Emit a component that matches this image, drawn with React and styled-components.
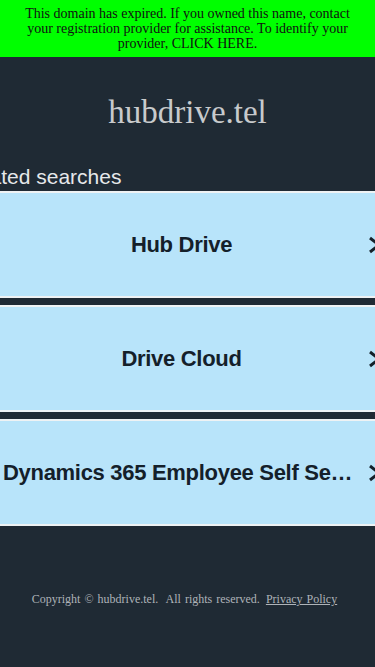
import styled, { createGlobalStyle } from "styled-components";

const GlobalStyle = createGlobalStyle`
    html, body {
        margin: 0;
        padding: 0;
        overflow-x: hidden;
        background: #1f2a34;
    }
    #root {
        min-height: 667px;
    }
`;

const Page = styled.div`
    min-height: 667px;
    background: #1f2a34;
    overflow: hidden;
`;

const Banner = styled.div`
    background: #00ff00;
    color: #111;
    font-family: "Liberation Serif", "Times New Roman", serif;
    font-size: 14px;
    line-height: 15px;
    text-align: center;
    padding: 6px 22px;
`;

const Title = styled.h1`
    margin: 0;
    padding: 37px 0 0;
    height: 58px;
    text-align: center;
    font-family: "Liberation Serif", "Times New Roman", serif;
    font-weight: 400;
    font-size: 33px;
    color: #c8cacc;
`;

const Heading = styled.div`
    margin: 13px 0 0 -42px;
    font-family: "Liberation Sans", Arial, sans-serif;
    font-size: 21px;
    line-height: 24px;
    color: #e6e8ea;
`;

const List = styled.div`
    display: flex;
    flex-direction: column;
    gap: 7px;
    margin-top: 2px;
    margin-right: -20px;
`;

const Card = styled.a`
    display: flex;
    align-items: center;
    height: 103px;
    padding-left: 3px;
    background: #b8e4fa;
    border-top: 2px solid #eef2f4;
    border-bottom: 2px solid #eef2f4;
    color: #14202a;
    text-decoration: none;
`;

const Label = styled.span`
    flex: 1;
    min-width: 0;
    max-width: 357px;
    white-space: nowrap;
    overflow: hidden;
    text-overflow: ellipsis;
    text-align: center;
    font-family: "Liberation Sans", Arial, sans-serif;
    font-weight: 700;
    font-size: 22px;
    letter-spacing: -0.3px;
`;

const Chevron = styled.svg`
    flex: none;
    margin-left: 8px;
    width: 14px;
    height: 18px;
`;

const Footer = styled.div`
    margin-top: 66px;
    padding-right: 6px;
    text-align: center;
    font-family: "Liberation Serif", "Times New Roman", serif;
    font-size: 12px;
    color: #aeb3b8;
    word-spacing: 1px;

    a {
        color: #aeb3b8;
        margin-left: 6px;
    }
`;

const searches = ["Hub Drive", "Drive Cloud", "Dynamics 365 Employee Self Service"];

function App() {
    return (
        <Page>
            <GlobalStyle />
            <Banner>
                This domain has expired. If you owned this name, contact your
                registration provider for assistance. To identify your provider,
                CLICK HERE.
            </Banner>
            <Title>hubdrive.tel</Title>
            <Heading>Related searches</Heading>
            <List>
                {searches.map((s) => (
                    <Card key={s} href="#">
                        <Label>{s}</Label>
                        <Chevron viewBox="0 0 14 18">
                            <path d="M2 2 L11 9 L2 16" fill="none" stroke="#14202a" strokeWidth="3" />
                        </Chevron>
                    </Card>
                ))}
            </List>
            <Footer>
                Copyright © hubdrive.tel.&nbsp; All rights reserved.
                <a href="#">Privacy Policy</a>
            </Footer>
        </Page>
    );
}

export default App;
